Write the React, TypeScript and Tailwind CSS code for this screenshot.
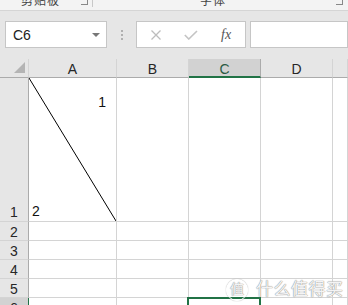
import React from "react";

const COLS = ["A", "B", "C", "D", ""];

function RowHeader({ n, selected }: { n: number; selected?: boolean }) {
  return (
    <div
      className={
        "flex items-center justify-center border-b border-r text-[14px] leading-none text-[#262626] " +
        (selected
          ? "bg-[#d2d2d2] border-r-[#217346] border-b-[#ababab]"
          : "bg-[#e6e6e6] border-r-[#ababab] border-b-[#d4d4d4]")
      }
    >
      <span className="pt-[2px]">{n}</span>
    </div>
  );
}

function Cell({ children, sel }: { children?: React.ReactNode; sel?: boolean }) {
  return (
    <div className="relative border-b border-r border-[#d4d4d4] bg-white">
      {children}
      {sel && <span className="absolute left-[-2px] top-[-1px] right-[-1px] h-[22px] border-2 border-[#217346]" />}
    </div>
  );
}

export default function App() {
  return (
    <div className="relative h-[305px] w-[348px] overflow-hidden bg-white font-['Liberation_Sans','Noto_Sans_CJK_SC',sans-serif] select-none">
      {/* ribbon group labels (cut off) */}
      <div className="flex h-[11px] items-start overflow-hidden border-b border-[#d5d5d5] bg-[#f3f3f3] text-[12px] text-[#444]">
        <span className="ml-[21px] mt-[-8px] w-[60px] tracking-[1px]">剪贴板</span>
        <span className="mt-[-2px] h-[7px] w-[7px] border-b border-r border-[#888]" />
        <span className="ml-[4px] h-[7px] w-px bg-[#c8c8c8]" />
        <span className="ml-[107px] mt-[-8px] w-[136px] tracking-[1px]">字体</span>
        <span className="mt-[-2px] h-[7px] w-[7px] border-b border-r border-[#888]" />
      </div>

      {/* formula bar */}
      <div className="flex h-[48px] items-start bg-[#e6e6e6] pt-[10px]">
        <div className="ml-[5px] flex h-[27px] w-[102px] items-center justify-between border border-[#c6c6c6] bg-white pl-[7px] pr-[6px] text-[14px] text-[#222]">
          <span className="pt-[1px]">C6</span>
          <span className="h-0 w-0 border-x-[4px] border-t-[4px] border-x-transparent border-t-[#777]" />
        </div>
        <div className="ml-[14px] mt-[9px] flex flex-col gap-[2px]">
          <span className="h-[2px] w-[2px] bg-[#b0b0b0]" />
          <span className="h-[2px] w-[2px] bg-[#b0b0b0]" />
          <span className="h-[2px] w-[2px] bg-[#b0b0b0]" />
        </div>
        <div className="ml-[13px] flex h-[27px] w-[110px] items-center border border-[#c6c6c6] bg-white">
          <svg width="12" height="10" viewBox="0 0 12 10" className="ml-[13px]">
            <path d="M1.5 0.5 L10.5 9.5 M10.5 0.5 L1.5 9.5" stroke="#bdbdbd" strokeWidth="1.3" fill="none" />
          </svg>
          <svg width="14" height="10" viewBox="0 0 14 10" className="ml-[22px]">
            <path d="M0.8 5 L4.8 9 L13 1" stroke="#c4c4c4" strokeWidth="1.6" fill="none" />
          </svg>
          <span className="ml-[23px] font-['Liberation_Serif',serif] text-[14px] italic text-[#555]">fx</span>
        </div>
        <div className="ml-[4px] h-[27px] flex-1 border border-[#c6c6c6] bg-white" />
      </div>

      {/* sheet grid */}
      <div className="grid grid-cols-[29px_88px_72px_72px_72px_1fr] grid-rows-[19px_144px_19px_19px_19px_19px_19px_19px] bg-white">
        <div className="flex items-end justify-end border-b border-r border-b-[#ababab] border-r-[#d4d4d4] bg-[#e6e6e6] pb-[4px] pr-[3px]">
          <span className="h-0 w-0 border-b-[11px] border-l-[11px] border-b-[#b4b4b4] border-l-transparent" />
        </div>
        {COLS.map((c) => (
          <div
            key={c || "e"}
            className={
              "flex items-center justify-center border-r text-[14px] leading-none " +
              (c === "C"
                ? "border-b-2 border-b-[#217346] border-r-[#ababab] bg-[#d2d2d2] text-[#2a5a44]"
                : "border-b border-b-[#ababab] border-r-[#d4d4d4] bg-[#e6e6e6] text-[#262626]")
            }
          >
            <span className="pt-[2px]">{c}</span>
          </div>
        ))}

        <div className="flex items-end justify-center border-b border-r border-b-[#d4d4d4] border-r-[#ababab] bg-[#e6e6e6] pb-[2px] text-[14px] leading-none text-[#262626]">
          1
        </div>
        <div className="relative flex flex-col justify-between border-b border-r border-[#d4d4d4] bg-white px-[3px] pb-[3px] pt-[17px] text-[14px] leading-none text-[#111]">
          <svg className="absolute inset-0 h-full w-full" viewBox="0 0 100 100" preserveAspectRatio="none">
            <line x1="0" y1="0" x2="100" y2="100" stroke="#000" strokeWidth="1" vectorEffect="non-scaling-stroke" />
          </svg>
          <span className="self-end pr-[7px]">1</span>
          <span>2</span>
        </div>
        <Cell />
        <Cell />
        <Cell />
        <Cell />

        {[2, 3, 4, 5, 6, 7].map((n) => (
          <React.Fragment key={n}>
            <RowHeader n={n} selected={n === 6} />
            <Cell />
            <Cell />
            <Cell sel={n === 6} />
            <Cell />
            <Cell />
          </React.Fragment>
        ))}
      </div>

      {/* watermark */}
      <div className="absolute left-[226px] top-[277px] flex items-center gap-[8px] text-[17px] text-white/90 [text-shadow:0_0_1px_#8a8a8a,0_0_1px_#8a8a8a]">
        <span className="flex h-[22px] w-[22px] items-center justify-center rounded-full border-[1.5px] border-white/90 text-[14px] shadow-[0_0_1px_#8a8a8a]">
          值
        </span>
        <span className="tracking-[0.5px]">什么值得买</span>
      </div>
    </div>
  );
}
